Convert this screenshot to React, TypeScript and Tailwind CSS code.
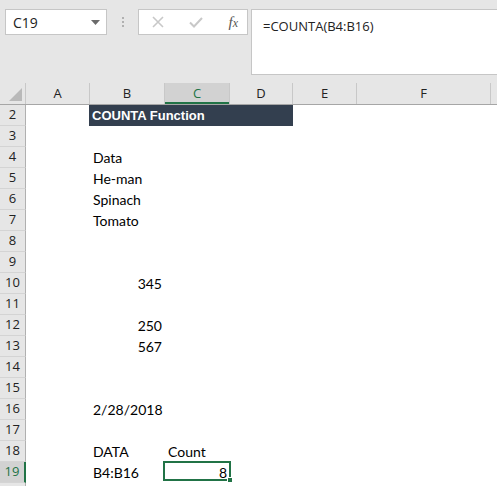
import React from "react";

const cols = ["A", "B", "C", "D", "E", "F"];

type Row = { n: number; b?: string; c?: string; bRight?: boolean; cRight?: boolean };

const rows: Row[] = [
  { n: 2 },
  { n: 3 },
  { n: 4, b: "Data" },
  { n: 5, b: "He-man" },
  { n: 6, b: "Spinach" },
  { n: 7, b: "Tomato" },
  { n: 8 },
  { n: 9 },
  { n: 10, b: "345", bRight: true },
  { n: 11 },
  { n: 12, b: "250", bRight: true },
  { n: 13, b: "567", bRight: true },
  { n: 14 },
  { n: 15 },
  { n: 16, b: "2/28/2018", bRight: true },
  { n: 17 },
  { n: 18, b: "DATA", c: "Count" },
  { n: 19, b: "B4:B16", c: "8", cRight: true },
  { n: 20 },
];

const gridCols = "grid grid-cols-[26px_64px_75px_65px_63px_64px_134px_1fr]";
const cellFont = { fontFamily: "Lato, 'Liberation Sans', sans-serif" };
const uiFont = { fontFamily: "'Open Sans', 'Liberation Sans', sans-serif" };

function Cell({ text, right }: { text?: string; right?: boolean }) {
  return (
    <div
      className={`flex items-end pb-[3px] px-[3px] text-[14px] leading-none text-black whitespace-nowrap ${right ? "justify-end" : "justify-start"}`}
      style={cellFont}
    >
      {text}
    </div>
  );
}

export default function App() {
  return (
    <div className="w-[497px] h-[486px] overflow-hidden bg-[#e6e6e6] select-none">
      {/* formula bar */}
      <div className="h-[83px] flex items-start pt-[9px] pl-[5px]">
        <div className="w-[102px] h-[26px] bg-white border border-[#c6c6c6] flex items-center justify-between pl-[7px] pr-[6px]">
          <span className="text-[14px] text-[#222]" style={uiFont}>C19</span>
          <svg width="9" height="5" viewBox="0 0 9 5">
            <path d="M0 0h9L4.5 5z" fill="#6b6b6b" />
          </svg>
        </div>
        <div className="w-[31px] h-[26px] flex flex-col items-center justify-center gap-[2px]">
          <span className="w-[2px] h-[2px] bg-[#b0b0b0]" />
          <span className="w-[2px] h-[2px] bg-[#b0b0b0]" />
          <span className="w-[2px] h-[2px] bg-[#b0b0b0]" />
        </div>
        <div className="w-[110px] h-[26px] bg-white border border-[#c6c6c6] flex items-center pl-[13px] pr-[9px] justify-between">
          <svg width="12" height="12" viewBox="0 0 12 12">
            <path d="M1 1l10 10M11 1L1 11" stroke="#c8c8c8" strokeWidth="1.6" />
          </svg>
          <svg width="14" height="12" viewBox="0 0 14 12">
            <path d="M1 6.5l4 4L13 2" stroke="#c8c8c8" strokeWidth="2" fill="none" />
          </svg>
          <span
            className="text-[15px] italic text-[#555] leading-none"
            style={{ fontFamily: "'Liberation Serif', serif" }}
          >
            f<span className="text-[12px]">x</span>
          </span>
        </div>
        <div className="ml-[3px] flex-1 h-[66px] bg-white border border-[#c6c6c6] border-r-0 pl-[11px] pt-[3px]">
          <span className="text-[13px] text-[#222]" style={uiFont}>=COUNTA(B4:B16)</span>
        </div>
      </div>

      {/* column headers */}
      <div className={`${gridCols} h-[22px] border-b border-[#a6a6a6]`}>
        <div className="relative border-r border-[#c8c8c8]">
          <svg className="absolute right-[3px] bottom-[3px]" width="13" height="13" viewBox="0 0 13 13">
            <path d="M13 0V13H0z" fill="#b9b9b9" />
          </svg>
        </div>
        {cols.map((c) => (
          <div
            key={c}
            className={`flex items-center justify-center text-[13px] border-r ${
              c === "C"
                ? "bg-[#d2d2d2] text-[#217346] border-[#c8c8c8] shadow-[inset_0_-2px_0_#217346]"
                : "text-[#222] border-[#c8c8c8]"
            }`}
            style={uiFont}
          >
            {c}
          </div>
        ))}
        <div />
      </div>

      {/* rows */}
      {rows.map((r) => {
        const sel = r.n === 19;
        return (
          <div key={r.n} className={`${gridCols} h-[21px]`}>
            <div
              className={`flex items-center justify-center text-[13px] border-b border-[#d4d4d4] ${
                sel
                  ? "bg-[#d2d2d2] text-[#217346] border-r-2 border-r-[#217346]"
                  : "text-[#222] border-r border-r-[#b0b0b0]"
              }`}
              style={uiFont}
            >
              {r.n < 20 ? r.n : ""}
            </div>
            <div className="bg-white" />
            {r.n === 2 ? (
              <div className="col-span-3 -ml-px bg-[#333f4f] flex items-center px-[3px]">
                <span className="text-[13px] font-bold text-white" style={{ fontFamily: "'Liberation Sans', Arial, sans-serif" }}>
                  COUNTA Function
                </span>
              </div>
            ) : (
              <>
                <div className="bg-white grid">
                  <Cell text={r.b} right={r.bRight} />
                </div>
                <div className="bg-white grid relative">
                  {sel && (
                    <div className="absolute -left-[2px] -top-px right-[-1px] bottom-[2px] border-2 border-[#217346]">
                      <span className="absolute -right-[4px] -bottom-[4px] w-[6px] h-[6px] bg-[#217346] border border-white" />
                    </div>
                  )}
                  <Cell text={r.c} right={r.cRight} />
                </div>
                <div className="bg-white" />
              </>
            )}
            <div className="bg-white" />
            <div className="bg-white" />
            <div className="bg-white" />
          </div>
        );
      })}
    </div>
  );
}
